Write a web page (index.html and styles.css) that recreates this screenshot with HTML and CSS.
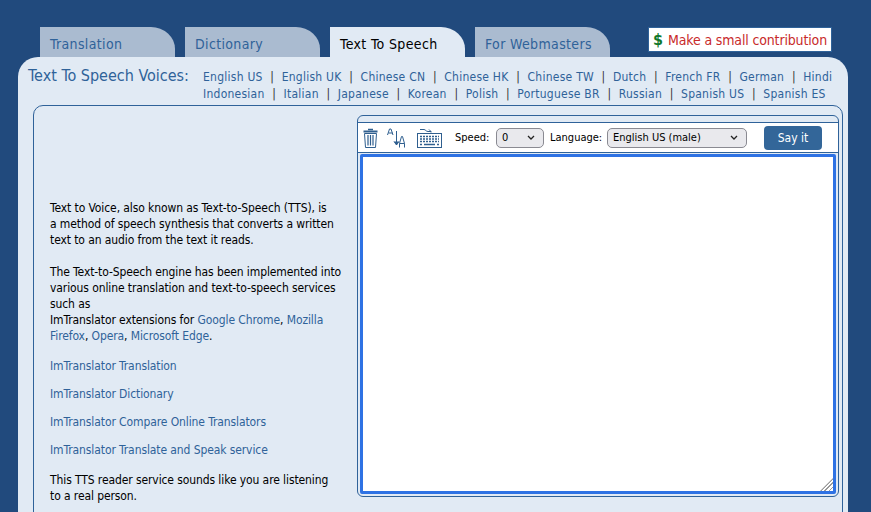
FILE: index.html
```html
<!DOCTYPE html>
<html lang="en">
<head>
    <meta charset="UTF-8">
    <title>Text To Speech</title>
    <link rel="stylesheet" href="styles.css">
</head>
<body>

    <div class="top-bar">
        <a class="tab" href="#">Translation</a>
        <a class="tab" href="#">Dictionary</a>
        <a class="tab active" href="#">Text To Speech</a>
        <a class="tab" href="#">For Webmasters</a>
        <a class="contribute" href="#"><span class="dollar">$</span>Make a small contribution</a>
    </div>

    <div class="panel">
        <div class="voices">
            <div class="voices-title">Text To Speech Voices:</div>
            <div class="voices-links">
                <div class="voices-row">
                    <a href="#">English US</a><i>|</i>
                    <a href="#">English UK</a><i>|</i>
                    <a href="#">Chinese CN</a><i>|</i>
                    <a href="#">Chinese HK</a><i>|</i>
                    <a href="#">Chinese TW</a><i>|</i>
                    <a href="#">Dutch</a><i>|</i>
                    <a href="#">French FR</a><i>|</i>
                    <a href="#">German</a><i>|</i>
                    <a href="#">Hindi</a>
                </div>
                <div class="voices-row">
                    <a href="#">Indonesian</a><i>|</i>
                    <a href="#">Italian</a><i>|</i>
                    <a href="#">Japanese</a><i>|</i>
                    <a href="#">Korean</a><i>|</i>
                    <a href="#">Polish</a><i>|</i>
                    <a href="#">Portuguese BR</a><i>|</i>
                    <a href="#">Russian</a><i>|</i>
                    <a href="#">Spanish US</a><i>|</i>
                    <a href="#">Spanish ES</a>
                </div>
            </div>
        </div>

        <div class="content">
            <!-- Texto de la izquierda -->
            <div class="about">
                <p>Text to Voice, also known as Text-to-Speech (TTS), is a method of speech synthesis that converts a written text to an audio from the text it reads.</p>
                <p class="about-ext">The Text-to-Speech engine has been implemented into various online translation and text-to-speech services such as<br>
                ImTranslator extensions for <a href="#">Google Chrome</a>, <a href="#">Mozilla Firefox</a>, <a href="#">Opera</a>, <a href="#">Microsoft Edge</a>.</p>
                <a class="about-link" href="#">ImTranslator Translation</a>
                <a class="about-link" href="#">ImTranslator Dictionary</a>
                <a class="about-link" href="#">ImTranslator Compare Online Translators</a>
                <a class="about-link" href="#">ImTranslator Translate and Speak service</a>
                <p class="about-end">This TTS reader service sounds like you are listening to a real person.</p>
            </div>

            <!-- Caja del lector -->
            <div class="reader">
                <div class="toolbar">
                    <svg class="icon-trash" width="15" height="20" viewBox="0 0 15 20" fill="none" stroke="#2f5f8f">
                        <path d="M5 1.500h5" stroke-width="1.500"/>
                        <path d="M.5 3.500h14" stroke-width="2"/>
                        <path d="M1.500 5.500l1 14h10l1-14z"/>
                        <path d="M5 7v10.500M7.500 7v10.500M10 7v10.500" stroke-width="1.200"/>
                    </svg>
                    <svg class="icon-sort" width="20" height="20" viewBox="0 0 20 20" fill="none" stroke="#2f5f8f">
                        <path d="M.5 7l2-6h1.500l2 6M1.500 5h4"/>
                        <path d="M9.500 3v14"/>
                        <path d="M7 13.500l2.500 3.500 2.500-3.500" fill="#2f5f8f"/>
                        <path d="M12.500 19.500v-4l2-7h1l2 7v4M12.500 15.500h5"/>
                    </svg>
                    <svg class="icon-keys" width="25" height="20" viewBox="0 0 25 20" fill="none" stroke="#2f5f8f">
                        <path d="M3 1.500h4c1.500 0 2 2 4 2h3M12 1.500l2 2v1"/>
                        <rect x=".5" y="5.500" width="24" height="14"/>
                        <path d="M3 8.500h19M3 11h19M3 13.500h19" stroke-width="1.500" stroke-dasharray="2 1"/>
                        <path d="M7 16.500h11M3 16.500h2M20 16.500h2" stroke-width="1.500"/>
                    </svg>
                    <label class="speed-label" for="speed">Speed:</label>
                    <select class="speed" id="speed"><option>0</option></select>
                    <label class="lang-label" for="language">Language:</label>
                    <select class="language" id="language"><option>English US (male)</option></select>
                    <button class="say-btn">Say it</button>
                </div>
                <div class="text-wrap">
                    <textarea class="reader-text"></textarea>
                    <span class="grip"></span>
                </div>
            </div>
        </div>
    </div>

</body>
</html>
```

FILE: styles.css
```css
html {
    height: 512px;
    overflow: hidden;
}
body {
    margin: 0;
    padding-top: 27px;
    background-color: #214a7d;
    font-family: "DejaVu Sans Condensed", "DejaVu Sans", sans-serif;
    font-size: 12px;
    line-height: 16px;
    color: #000;
}
a {
    color: #2f6299;
    text-decoration: none;
}
.top-bar {
    display: flex;
    align-items: flex-start;
    gap: 10px;
    padding-left: 40px;
    height: 30px;
}
.tab {
    box-sizing: border-box;
    width: 135px;
    height: 30px;
    padding: 8px 0 0 10px;
    background-color: #aabbd0;
    border-top-right-radius: 24px 22px;
    font-size: 14px;
    line-height: 18px;
    letter-spacing: 0.35px;
}
.tab.active {
    background-color: #e1eaf4;
    color: #000;
}
.contribute {
    box-sizing: border-box;
    display: flex;
    align-items: center;
    width: 184px;
    height: 25px;
    margin-left: 28px;
    padding-left: 4px;
    background-color: #fff;
    border: 1px solid #2f6299;
    color: #c82a2a;
    font-size: 14px;
    letter-spacing: -0.15px;
    white-space: nowrap;
}
.dollar {
    width: 15px;
    color: #11782a;
    font-weight: bold;
    font-size: 16px;
}
.panel {
    box-sizing: border-box;
    height: 500px;
    margin: 0 23px 0 18px;
    padding: 9px 5px 0 15px;
    background-color: #e1eaf4;
    border-radius: 20px 20px 0 0;
}
.voices {
    display: flex;
    height: 39px;
}
.voices-title {
    width: 175px;
    margin-left: -5px;
    color: #2f6299;
    font-size: 16px;
    line-height: 20px;
}
.voices-links {
    padding-top: 3px;
    line-height: 17px;
}
.voices-row {
    display: flex;
    white-space: nowrap;
}
.voices-row a {
    letter-spacing: 0.25px;
}
.voices-row i {
    font-style: normal;
    width: 19px;
    text-align: center;
    color: #333;
}
.content {
    box-sizing: border-box;
    height: 420px;
    display: flex;
    border: 1px solid #2f6299;
    border-radius: 10px 10px 0 0;
}
.about {
    width: 296px;
    margin-left: 16px;
    padding-top: 94px;
    letter-spacing: -0.1px;
}
.about p {
    max-width: 285px;
    margin: 0 0 16px;
}
.about p.about-ext {
    max-width: 296px;
    margin-bottom: 14px;
}
.about-link {
    display: block;
    margin-bottom: 12px;
}
.about p.about-end {
    margin-top: 14px;
}
.reader {
    box-sizing: border-box;
    width: 482px;
    height: 382px;
    margin: 9px 0 0 11px;
    padding-top: 6px;
    background-color: #e1eaf4;
    border: 1px solid #2f6299;
    border-radius: 6px;
}
.toolbar {
    box-sizing: border-box;
    display: flex;
    align-items: center;
    height: 31px;
    padding-left: 5px;
    background-color: #fff;
    border-top: 1px solid #2f6299;
    border-bottom: 1px solid #2f6299;
    font-size: 11px;
}
.icon-sort {
    margin-left: 9px;
}
.icon-keys {
    margin-left: 10px;
}
.speed-label {
    margin-left: 13px;
    width: 41px;
}
.speed, .language {
    appearance: none;
    box-sizing: border-box;
    height: 20px;
    padding: 0 0 0 5px;
    background: #e9e9ed url("data:image/svg+xml,%3Csvg xmlns='http://www.w3.org/2000/svg' width='8' height='5'%3E%3Cpath d='M1 1l3 3 3-3' fill='none' stroke='%23222' stroke-width='1.300'/%3E%3C/svg%3E") no-repeat right 8px center;
    border: 1px solid #8a8a92;
    border-radius: 5px;
    font: inherit;
    color: #000;
}
.speed {
    width: 48px;
}
.lang-label {
    margin-left: 6px;
    width: 57px;
}
.language {
    width: 140px;
}
.say-btn {
    width: 58px;
    height: 24px;
    margin-left: 17px;
    padding: 0;
    background-color: #336699;
    border: 0;
    border-radius: 4px;
    color: #fff;
    font-size: 12px;
    font-family: inherit;
}
.text-wrap {
    position: relative;
    margin: 1px 0 0 2px;
    width: 476px;
    height: 340px;
}
.reader-text {
    display: block;
    box-sizing: border-box;
    width: 476px;
    height: 340px;
    background-color: #fff;
    border: 3px solid #2e72e4;
    border-radius: 2px;
    outline: 0;
    resize: none;
}
.grip {
    position: absolute;
    right: 3px;
    bottom: 3px;
    width: 13px;
    height: 13px;
    background: repeating-linear-gradient(135deg, #999 0 1px, #fff 1px 3px);
    clip-path: polygon(100% 0, 100% 100%, 0 100%);
}
```
